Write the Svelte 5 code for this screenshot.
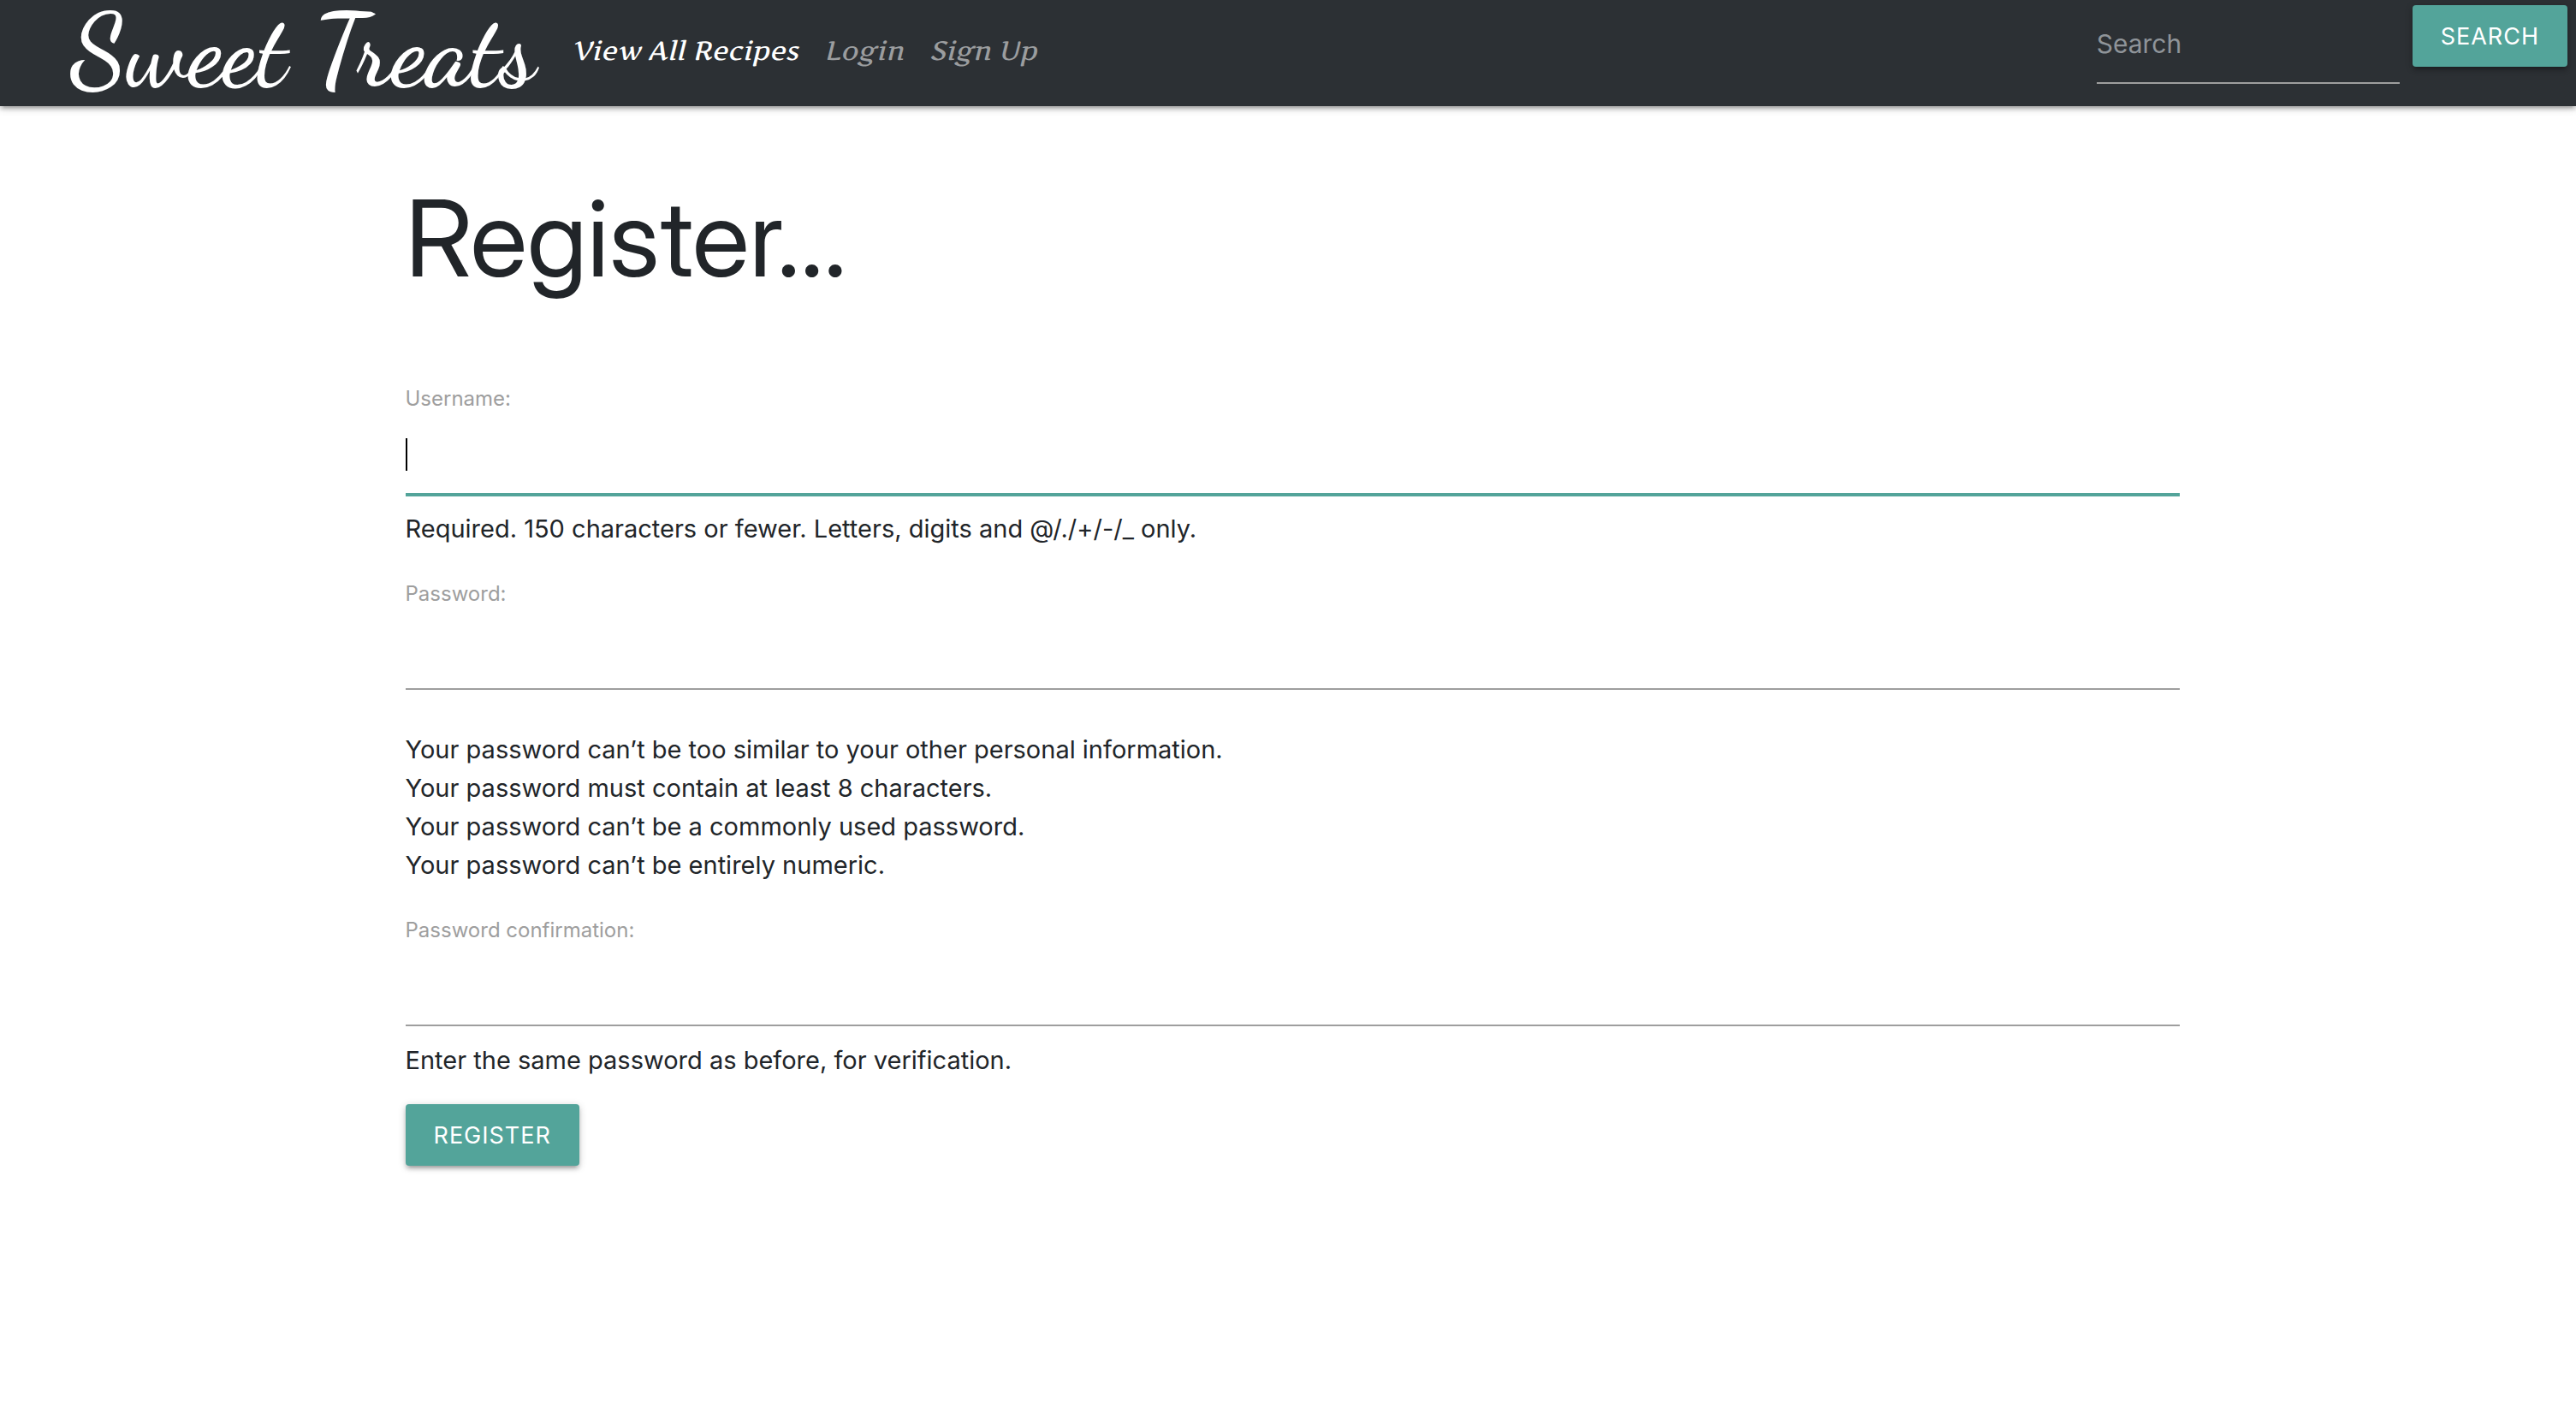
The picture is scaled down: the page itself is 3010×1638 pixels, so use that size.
<script>
  const links = [
    { label: 'View All Recipes', active: true },
    { label: 'Login', active: false },
    { label: 'Sign Up', active: false }
  ];
  const passwordRules = [
    'Your password can’t be too similar to your other personal information.',
    'Your password must contain at least 8 characters.',
    'Your password can’t be a commonly used password.',
    'Your password can’t be entirely numeric.'
  ];
</script>

<header class="navbar">
  <a class="brand" href="#home">Sweet Treats</a>
  <nav class="links">
    {#each links as link}
      <a class="link" class:active={link.active} href="#top">{link.label}</a>
    {/each}
  </nav>
  <form class="search">
    <input class="search-input" type="search" placeholder="Search" aria-label="Search" />
    <button class="btn" type="button">Search</button>
  </form>
</header>

<main class="container">
  <h1>Register...</h1>
  <form>
    <div class="field">
      <label for="username">Username:</label>
      <div class="control">
        <input class="focused" id="username" type="text" />
        <span class="caret"></span>
      </div>
      <p class="help">Required. 150 characters or fewer. Letters, digits and @/./+/-/_ only.</p>
    </div>
    <div class="field">
      <label for="password">Password:</label>
      <input id="password" type="password" />
      <ul class="rules">
        {#each passwordRules as rule}
          <li>{rule}</li>
        {/each}
      </ul>
    </div>
    <div class="field">
      <label for="confirmation">Password confirmation:</label>
      <input id="confirmation" type="password" />
      <p class="help">Enter the same password as before, for verification.</p>
    </div>
    <button class="btn" type="button">Register</button>
  </form>
</main>

<style>
  :global(body) {
    background: #fff;
    color: #212529;
    font-family: Inter, Roboto, sans-serif;
    font-size: 29px;
    line-height: 45px;
  }

  .navbar {
    display: flex;
    align-items: flex-start;
    height: 124px;
    box-sizing: border-box;
    padding: 0 10px 0 82px;
    background: #2c3034;
    box-shadow: 0 4px 4px rgba(0, 0, 0, 0.14), 0 6px 2px -4px rgba(0, 0, 0, 0.12),
      0 2px 10px rgba(0, 0, 0, 0.2);
  }

  .brand {
    color: #fff;
    font-family: "Dancing Script", "Liberation Serif", cursive;
    font-size: 118px;
    font-weight: 600;
    line-height: 120px;
    text-decoration: none;
    white-space: nowrap;
  }

  .links {
    display: flex;
    gap: 30px;
    margin-left: 42px;
  }

  .link {
    color: #9b9d9f;
    font-family: Artifika, Merienda, Lato, sans-serif;
    font-size: 31px;
    font-style: italic;
    line-height: 118px;
    text-decoration: none;
    white-space: nowrap;
  }

  .link.active {
    color: #fff;
  }

  .search {
    display: flex;
    align-items: flex-start;
    gap: 15px;
    margin-left: auto;
    padding-top: 6px;
  }

  input {
    display: block;
    box-sizing: border-box;
    width: 100%;
    height: 94px;
    padding: 0;
    border: 0;
    border-bottom: 2px solid #9e9e9e;
    border-radius: 0;
    outline: none;
    background: transparent;
    color: #212529;
    font: inherit;
  }

  .search-input {
    width: 354px;
    height: 92px;
    color: #fff;
    font-size: 30px;
    appearance: none;
  }

  .search-input::placeholder {
    color: #8f9499;
    opacity: 1;
  }

  .btn {
    height: 72px;
    padding: 0 33px;
    border: 0;
    border-radius: 4px;
    background: #53a49a;
    box-shadow: 0 4px 4px rgba(0, 0, 0, 0.14), 0 6px 2px -4px rgba(0, 0, 0, 0.12),
      0 2px 10px rgba(0, 0, 0, 0.2);
    color: #fff;
    font: inherit;
    font-size: 27px;
    letter-spacing: 1px;
    text-transform: uppercase;
  }

  .container {
    box-sizing: border-box;
    width: 70%;
    margin: 0 auto;
    padding: 84px 12px 84px 22px;
  }

  h1 {
    margin: 0 0 100px;
    font-family: "Inter Display", "Inter Tight", Inter, Roboto, sans-serif;
    font-size: 124px;
    font-weight: 400;
    line-height: 140px;
  }

  .field {
    margin-bottom: 36px;
  }

  .field:last-of-type {
    margin-bottom: 29px;
  }

  label {
    display: block;
    color: #9e9e9e;
    font-size: 24px;
    line-height: 36px;
  }

  .control {
    position: relative;
  }

  input.focused {
    border-bottom-color: #53a49a;
    box-shadow: 0 2px 0 #53a49a;
  }

  .caret {
    position: absolute;
    top: 28px;
    left: 0;
    width: 2px;
    height: 38px;
    background: #000;
    pointer-events: none;
  }

  .help {
    margin: 17px 0 0;
  }

  .rules {
    margin: 47px 0 0;
    padding: 0;
    list-style: none;
  }
</style>
